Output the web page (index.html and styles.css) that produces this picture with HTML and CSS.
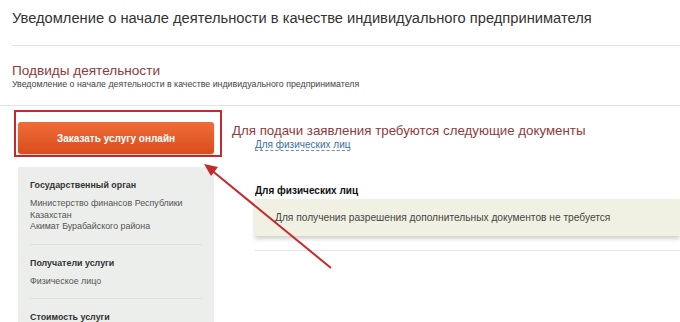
FILE: index.html
```html
<!DOCTYPE html>
<html>
  <head>
    <title>Уведомление о начале деятельности</title>
    <link rel="stylesheet" href="styles.css">
  </head>
  <body>
    <h1 class="page-title">Уведомление о начале деятельности в качестве индивидуального предпринимателя</h1>

    <div class="subtypes">
      <h2>Подвиды деятельности</h2>
      <div class="subtypes-note">Уведомление о начале деятельности в качестве индивидуального предпринимателя</div>
    </div>

    <div class="content">
      <div class="aside">
        <div class="highlight">
          <button class="order-btn">Заказать услугу онлайн</button>
        </div>
        <div class="info">
          <div class="info-block">
            <div class="info-title">Государственный орган</div>
            <div class="info-text">Министерство финансов Республики Казахстан<br>Акимат Бурабайского района</div>
          </div>
          <div class="info-block">
            <div class="info-title">Получатели услуги</div>
            <div class="info-text">Физическое лицо</div>
          </div>
          <div class="info-block">
            <div class="info-title">Стоимость услуги</div>
          </div>
        </div>
      </div>

      <div class="main">
        <h3 class="docs-title">Для подачи заявления требуются следующие документы</h3>
        <div class="docs-tabs">
          <a class="docs-tab" href="#">Для физических лиц</a>
        </div>
        <div class="docs-group">
          <div class="docs-group-title">Для физических лиц</div>
          <div class="docs-note">Для получения разрешения дополнительных документов не требуется</div>
        </div>
      </div>

      <!-- стрелка-подсказка -->
      <svg class="arrow" width="680" height="220" viewBox="0 0 680 220">
        <line x1="331" y1="162" x2="210" y2="63" stroke="#c42a2c" stroke-width="2"/>
        <polygon points="204,58 218,61 211,70" fill="#c42a2c"/>
      </svg>
    </div>
  </body>
</html>
```

FILE: styles.css
```css
body {
  margin: 0;
  font-family: "Liberation Sans", Arial, sans-serif;
  background: #fff;
  color: #333;
  overflow: hidden;
}
.page-title {
  margin: 0 0 0 12px;
  padding: 9px 0 0;
  height: 36px;
  font-size: 14.7px;
  line-height: 18px;
  font-weight: normal;
  color: #333;
  border-bottom: 1px solid #e3e3e3;
}
.subtypes {
  padding: 16px 12px 0;
  height: 43px;
  border-bottom: 1px solid #e3e3e3;
}
.subtypes h2 {
  margin: 0;
  font-size: 13.6px;
  line-height: 17px;
  font-weight: normal;
  color: #8e3b3d;
}
.subtypes-note {
  font-size: 8.8px;
  line-height: 11px;
  color: #444;
}
.content {
  position: relative;
  display: flex;
}
.aside {
  width: 208px;
  padding-left: 14px;
  padding-top: 4px;
}
.highlight {
  border: 2px solid #c42a2c;
  padding: 10px 6px 1px 2px;
  width: 196px;
}
.order-btn {
  display: block;
  width: 196px;
  height: 32px;
  border: none;
  border-radius: 3px;
  background: linear-gradient(#ef6d38, #d94d1c);
  color: #fff;
  font-family: "Liberation Sans", Arial, sans-serif;
  font-size: 10px;
  font-weight: bold;
  box-shadow: 0 1px 2px rgba(0, 0, 0, 0.25);
}
.info {
  margin: 10px 0 0 4px;
  width: 196px;
  background: #eceeec;
  padding: 0 12px;
  box-sizing: border-box;
  height: 160px;
}
.info-block {
  padding: 13px 0 11px;
  border-bottom: 1px solid #dfe1df;
  font-size: 8.9px;
}
.info-block:last-child {
  border-bottom: none;
}
.info-title {
  font-weight: bold;
  color: #333;
  line-height: 11px;
  margin-bottom: 7px;
}
.info-text {
  color: #555;
  line-height: 11.5px;
}
.main {
  flex: 1;
  padding-left: 10px;
  padding-top: 17px;
}
.docs-title {
  margin: 0;
  font-size: 13.3px;
  font-weight: normal;
  color: #8e3b3d;
  line-height: 16px;
}
.docs-tabs {
  line-height: 12px;
  height: 14px;
  margin-top: -2px;
}
.docs-tab {
  margin-left: 23px;
  font-size: 10px;
  color: #3d6f9c;
  text-decoration: none;
  border-bottom: 1px dashed #6a8fb0;
}
.docs-group {
  margin: 34px 0 0 23px;
  padding-bottom: 14px;
  border-bottom: 1px solid #e6e6e6;
}
.docs-group-title {
  font-size: 10px;
  line-height: 12px;
  font-weight: bold;
  color: #111;
  margin-bottom: 2px;
}
.docs-note {
  background: #f1f1e3;
  padding: 12px 20px 12px;
  font-size: 10.2px;
  line-height: 13px;
  color: #444;
  box-shadow: 0 3px 4px rgba(0, 0, 0, 0.18);
}
.arrow {
  position: absolute;
  left: 0;
  top: 0;
  pointer-events: none;
}
```
